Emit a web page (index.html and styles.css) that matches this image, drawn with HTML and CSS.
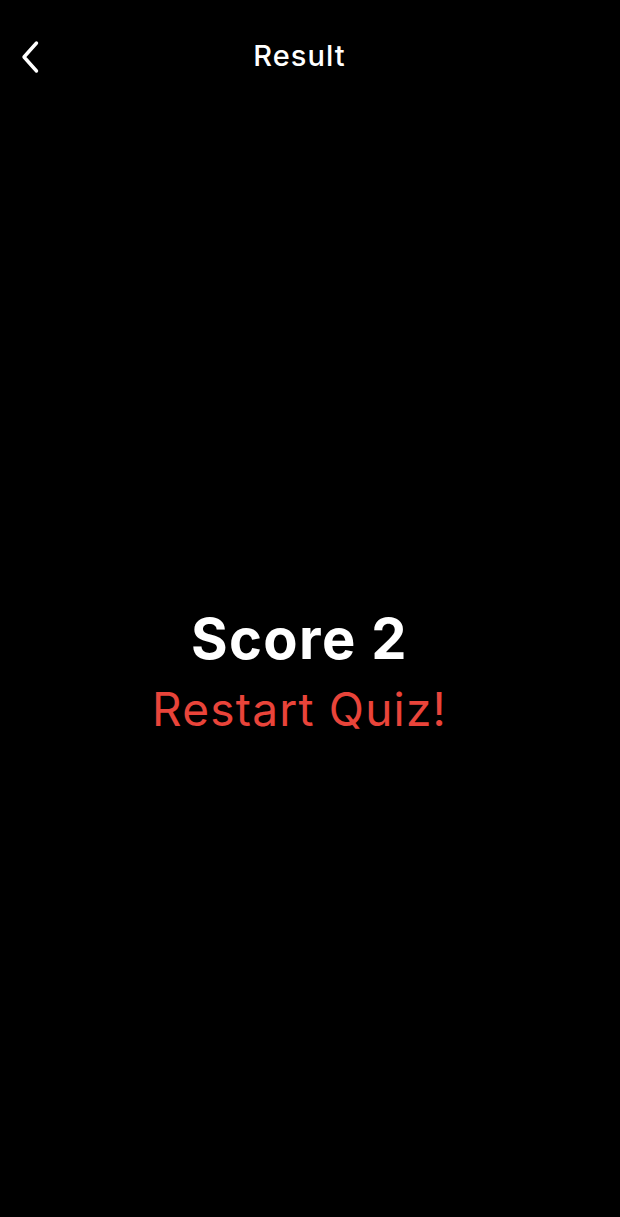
FILE: index.html
```html
<!DOCTYPE html>
<html>
<head>
<meta charset="utf-8">
<link rel="stylesheet" href="styles.css">
</head>
<body>
<div class="screen">
  <header class="nav">
    <button class="back" aria-label="Back">
      <svg width="20" height="34" viewBox="0 0 20 34"><path d="M16.5 3 L4 17 L16.5 31" fill="none" stroke="#fff" stroke-width="3.4" stroke-linecap="round" stroke-linejoin="round"/></svg>
    </button>
    <h1 class="title">Result</h1>
  </header>
  <main class="content">
    <div class="score">Score 2</div>
    <div class="restart">Restart Quiz!</div>
  </main>
</div>
</body>
</html>
```
FILE: styles.css
```css
* { box-sizing: border-box; }
html, body { margin: 0; padding: 0; background: #000; }
body { font-family: Inter, "Noto Sans", sans-serif; color: #fff; }
.screen { width: 620px; height: 1217px; display: flex; flex-direction: column; padding-right: 21px; }
.nav { position: relative; height: 110px; display: flex; justify-content: center; padding-top: 36px; }
.back { position: absolute; left: 18px; top: 40px; background: none; border: 0; padding: 0; width: 24px; height: 34px; }
.title { margin: 0; font-size: 29px; font-weight: 500; line-height: 40px; letter-spacing: 1.1px; }
.content { flex: 1; display: flex; flex-direction: column; align-items: center; justify-content: center; padding-top: 14px; }
.score { font-size: 56px; font-weight: 700; line-height: 66px; letter-spacing: 1.4px; }
.restart { margin-top: 11px; font-size: 46px; font-weight: 400; color: #e9443a; line-height: 52px; letter-spacing: 1.2px; }
```
